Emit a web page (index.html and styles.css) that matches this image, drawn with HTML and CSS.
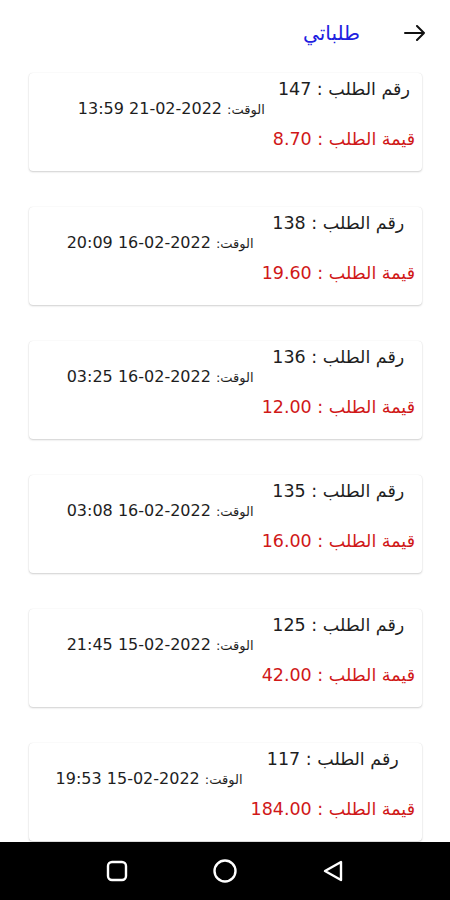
FILE: index.html
```html
<!DOCTYPE html>
<html lang="ar">
<head>
<meta charset="utf-8">
<title>طلباتي</title>
<link rel="stylesheet" href="styles.css">
</head>
<body>
<div class="screen">
  <header class="topbar">
    <svg class="back" width="22" height="16" viewBox="0 0 22 16" aria-hidden="true">
      <path d="M1 8 H20 M13 1 L20 8 L13 15" fill="none" stroke="#111" stroke-width="2" stroke-linecap="round" stroke-linejoin="round"/>
    </svg>
    <h1 class="title">طلباتي</h1>
  </header>

  <main class="list">
    <div class="card">
      <div class="num">رقم الطلب : 147</div>
      <div class="time"><span class="lbl">الوقت:</span> <span class="dt" dir="ltr">21-02-2022</span> <span class="dt" dir="ltr">13:59</span></div>
      <div class="price">قيمة الطلب : 8.70</div>
    </div>
    <div class="card">
      <div class="num">رقم الطلب : 138</div>
      <div class="time"><span class="lbl">الوقت:</span> <span class="dt" dir="ltr">16-02-2022</span> <span class="dt" dir="ltr">20:09</span></div>
      <div class="price">قيمة الطلب : 19.60</div>
    </div>
    <div class="card">
      <div class="num">رقم الطلب : 136</div>
      <div class="time"><span class="lbl">الوقت:</span> <span class="dt" dir="ltr">16-02-2022</span> <span class="dt" dir="ltr">03:25</span></div>
      <div class="price">قيمة الطلب : 12.00</div>
    </div>
    <div class="card">
      <div class="num">رقم الطلب : 135</div>
      <div class="time"><span class="lbl">الوقت:</span> <span class="dt" dir="ltr">16-02-2022</span> <span class="dt" dir="ltr">03:08</span></div>
      <div class="price">قيمة الطلب : 16.00</div>
    </div>
    <div class="card">
      <div class="num">رقم الطلب : 125</div>
      <div class="time"><span class="lbl">الوقت:</span> <span class="dt" dir="ltr">15-02-2022</span> <span class="dt" dir="ltr">21:45</span></div>
      <div class="price">قيمة الطلب : 42.00</div>
    </div>
    <div class="card">
      <div class="num">رقم الطلب : 117</div>
      <div class="time"><span class="lbl">الوقت:</span> <span class="dt" dir="ltr">15-02-2022</span> <span class="dt" dir="ltr">19:53</span></div>
      <div class="price">قيمة الطلب : 184.00</div>
    </div>
  </main>

  <nav class="navbar">
    <svg width="24" height="24" viewBox="0 0 24 24" aria-hidden="true"><rect x="3" y="3" width="18" height="18" rx="4" fill="none" stroke="#fff" stroke-width="2.4"/></svg>
    <svg width="26" height="26" viewBox="0 0 26 26" aria-hidden="true"><circle cx="13" cy="13" r="10.5" fill="none" stroke="#fff" stroke-width="2.4"/></svg>
    <svg width="24" height="24" viewBox="0 0 24 24" aria-hidden="true"><path d="M20 3 L20 21 L4 12 Z" fill="none" stroke="#fff" stroke-width="2.4" stroke-linejoin="round"/></svg>
  </nav>
</div>
</body>
</html>
```
FILE: styles.css
```css
html, body {
  margin: 0;
  padding: 0;
  background: #fff;
}
body {
  font-family: "DejaVu Sans", sans-serif;
  color: #1e1e1e;
}
.screen {
  width: 450px;
  height: 900px;
  overflow: hidden;
}
.topbar {
  direction: rtl;
  height: 66px;
  display: flex;
  align-items: center;
  padding-right: 24px;
  gap: 44px;
}
.back {
  display: block;
}
.title {
  margin: 0;
  font-size: 20px;
  font-weight: normal;
  color: #2020e0;
  line-height: 24px;
}
.list {
  padding-top: 7px;
  display: flex;
  flex-direction: column;
  gap: 36px;
  padding-left: 29px;
  padding-right: 28px;
}
.card {
  direction: rtl;
  height: 98px;
  box-sizing: border-box;
  background: #fff;
  border-radius: 4px;
  box-shadow: 0 1px 2px rgba(0,0,0,0.18), 0 0 1px rgba(0,0,0,0.12);
  display: grid;
  grid-template-columns: auto auto;
  grid-template-rows: auto auto auto;
  justify-content: start;
  align-content: start;
  column-gap: 8px;
  padding: 6px 7px 0 0;
}
.num {
  grid-column: 1;
  grid-row: 1;
  justify-self: center;
  font-size: 17.5px;
  line-height: 20px;
  color: #1e1e1e;
  white-space: nowrap;
}
.time {
  grid-column: 2;
  grid-row: 2;
  justify-self: start;
  line-height: 20px;
  white-space: nowrap;
  color: #1e1e1e;
}
.lbl {
  font-size: 13px;
}
.dt {
  font-size: 16px;
}
.price {
  grid-column: 1;
  grid-row: 3;
  margin-top: 9px;
  font-size: 17.5px;
  line-height: 20px;
  color: #d01818;
  white-space: nowrap;
}
.navbar {
  position: fixed;
  left: 0;
  bottom: 0;
  width: 450px;
  height: 58px;
  background: #000;
  display: flex;
  align-items: center;
  justify-content: space-between;
  padding: 0 105px;
  box-sizing: border-box;
}
.navbar svg {
  display: block;
}
```
